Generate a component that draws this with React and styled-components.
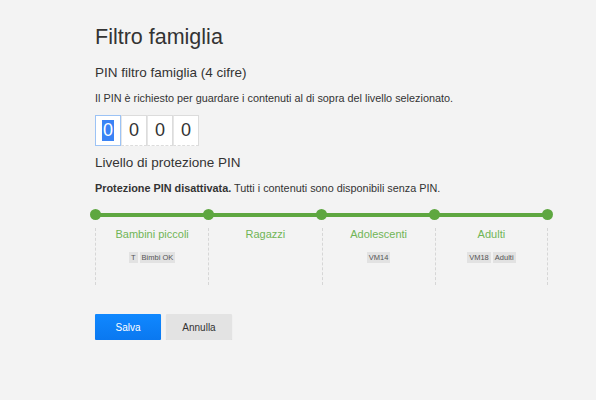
import React from "react";
import styled, { createGlobalStyle } from "styled-components";

const Global = createGlobalStyle`
  html, body {
    margin: 0;
    padding: 0;
    background: #f3f3f3;
    font-family: "Liberation Sans", Arial, sans-serif;
    color: #333;
  }
`;

const Page = styled.div`
  width: 453px;
  margin-left: 95px;
  padding-top: 24px;
`;

const Title = styled.h1`
  margin: 0;
  font-size: 21.5px;
  font-weight: normal;
  line-height: 26px;
  color: #333;
`;

const Subtitle = styled.h2`
  margin: ${(p) => p.$top || 0}px 0 0;
  font-size: 13.5px;
  font-weight: normal;
  line-height: 18px;
  color: #333;
`;

const Text = styled.p`
  margin: ${(p) => p.$top || 0}px 0 0;
  font-size: 10.85px;
  line-height: 14px;
  color: #333;
  b {
    font-weight: bold;
  }
`;

const PinRow = styled.div`
  display: flex;
  margin-top: 10px;
`;

const PinBox = styled.div`
  width: 26px;
  height: 31px;
  box-sizing: border-box;
  display: flex;
  align-items: center;
  justify-content: center;
  background: #fff;
  border: 1px solid ${(p) => (p.$focus ? "#9cc3f5" : "#dcdcdc")};
  border-left-color: ${(p) => (p.$focus ? "#9cc3f5" : "#e6e6e6")};
  border-bottom-style: ${(p) => (p.$focus ? "solid" : "dashed")};
  font-size: 18px;
  color: #333;
  span {
    background: ${(p) => (p.$focus ? "#3a83f5" : "transparent")};
    color: ${(p) => (p.$focus ? "#fff" : "#333")};
    line-height: 21px;
    padding: 0 1px;
  }
`;

const Track = styled.div`
  display: flex;
  align-items: center;
  margin: 14px -5px 0;
`;

const Dot = styled.div`
  width: 11px;
  height: 11px;
  border-radius: 50%;
  background: #5ea740;
  flex: none;
`;

const Segment = styled.div`
  flex: 1;
  height: 4px;
  background: #5ea740;
  margin: 0 -1px;
`;

const Levels = styled.div`
  display: grid;
  grid-template-columns: repeat(4, 1fr);
  margin-top: 8px;
`;

const Level = styled.div`
  height: 57px;
  border-left: 1px dashed #d6d6d6;
  border-right: ${(p) => (p.$last ? "1px dashed #d6d6d6" : "none")};
  display: flex;
  flex-direction: column;
  align-items: center;
`;

const LevelName = styled.div`
  margin-top: -1px;
  font-size: 11px;
  line-height: 14px;
  color: #70b556;
`;

const Tags = styled.div`
  display: flex;
  gap: 2px;
  margin-top: 11px;
`;

const Tag = styled.span`
  background: #e2e2e2;
  color: #555;
  font-size: 7.5px;
  line-height: 11px;
  padding: 0 2px;
`;

const Buttons = styled.div`
  display: flex;
  gap: 5px;
  margin-top: 29px;
`;

const Button = styled.button`
  width: ${(p) => p.$w}px;
  height: 26px;
  border: none;
  border-radius: 1px;
  font-family: inherit;
  font-size: 10px;
  cursor: pointer;
  background: ${(p) =>
    p.$primary ? "linear-gradient(#1088ff, #0a78f0)" : "#e3e3e3"};
  color: ${(p) => (p.$primary ? "#fff" : "#333")};
  box-shadow: 0 1px 1px rgba(0, 0, 0, 0.15);
`;

const levels = [
  { name: "Bambini piccoli", tags: ["T", "Bimbi OK"] },
  { name: "Ragazzi", tags: [] },
  { name: "Adolescenti", tags: ["VM14"] },
  { name: "Adulti", tags: ["VM18", "Adulti"] },
];

export default function App() {
  return (
    <>
      <Global />
      <Page>
        <Title>Filtro famiglia</Title>
        <Subtitle $top={14}>PIN filtro famiglia (4 cifre)</Subtitle>
        <Text $top={9}>
          Il PIN è richiesto per guardare i contenuti al di sopra del livello
          selezionato.
        </Text>
        <PinRow>
          {[0, 1, 2, 3].map((i) => (
            <PinBox key={i} $focus={i === 0}>
              <span>0</span>
            </PinBox>
          ))}
        </PinRow>
        <Subtitle $top={8}>Livello di protezione PIN</Subtitle>
        <Text $top={9}>
          <b>Protezione PIN disattivata.</b> Tutti i contenuti sono disponibili
          senza PIN.
        </Text>
        <Track>
          <Dot />
          <Segment />
          <Dot />
          <Segment />
          <Dot />
          <Segment />
          <Dot />
          <Segment />
          <Dot />
        </Track>
        <Levels>
          {levels.map((l, i) => (
            <Level key={l.name} $last={i === levels.length - 1}>
              <LevelName>{l.name}</LevelName>
              {l.tags.length > 0 && (
                <Tags>
                  {l.tags.map((t) => (
                    <Tag key={t}>{t}</Tag>
                  ))}
                </Tags>
              )}
            </Level>
          ))}
        </Levels>
        <Buttons>
          <Button $primary $w={66}>
            Salva
          </Button>
          <Button $w={66}>Annulla</Button>
        </Buttons>
      </Page>
    </>
  );
}
